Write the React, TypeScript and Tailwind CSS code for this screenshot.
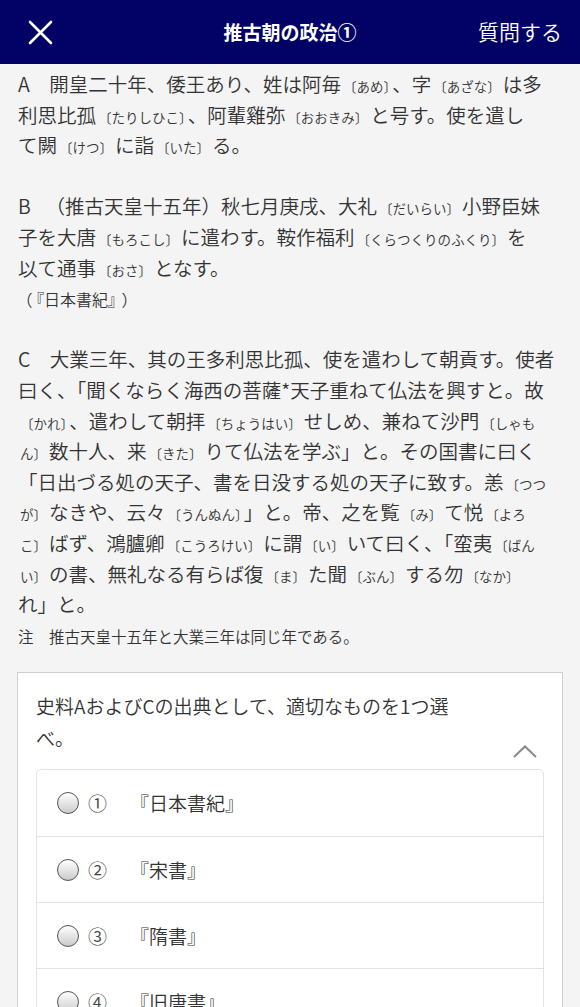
import type { ReactNode } from 'react'

const R = ({ children }: { children: ReactNode }) => (
  <span className="text-[13.5px] mx-[2px]">{children}</span>
)

const Line = ({ children }: { children?: ReactNode }) => (
  <div className="whitespace-nowrap h-[30.6px] leading-[30.6px]">{children}</div>
)

const options = [
  { no: '①', label: '『日本書紀』' },
  { no: '②', label: '『宋書』' },
  { no: '③', label: '『隋書』' },
  { no: '④', label: '『旧唐書』' },
]

export default function App() {
  return (
    <div className="min-h-screen bg-[#f4f4f4] text-[#333] font-['Noto_Sans_CJK_JP',sans-serif]">
      <header className="h-[64px] bg-[#020266] grid grid-cols-[1fr_auto_1fr] items-center text-white">
        <div className="pl-[28px]">
          <svg width="25" height="25" viewBox="0 0 25 25" fill="none" stroke="white" strokeWidth="2.6" strokeLinecap="round">
            <path d="M2 2 L23 23 M23 2 L2 23" />
          </svg>
        </div>
        <h1 className="text-[19px] font-bold">推古朝の政治①</h1>
        <div className="text-right pr-[18px] text-[21px] font-[350]">質問する</div>
      </header>

      <main className="px-[18px] pt-[5px] text-[19.5px] font-[350]">
        <Line>A　開皇二十年、倭王あり、姓は阿毎<R>〔あめ〕</R>、字<R>〔あざな〕</R>は多</Line>
        <Line>利思比孤<R>〔たりしひこ〕</R>、阿輩雞弥<R>〔おおきみ〕</R>と号す。使を遣し</Line>
        <Line>て闕<R>〔けつ〕</R>に詣<R>〔いた〕</R>る。</Line>
        <Line />
        <Line>B　<span className="ml-[5px]">（推古天皇十五年）</span>秋七月庚戌、大礼<R>〔だいらい〕</R>小野臣妹</Line>
        <Line>子を大唐<R>〔もろこし〕</R>に遣わす。鞍作福利<R>〔くらつくりのふくり〕</R>を</Line>
        <Line>以て通事<R>〔おさ〕</R>となす。</Line>
        <Line>
          <span className="text-[16px] [font-feature-settings:'palt']">
            <span className="inline-block w-[14px] text-right">（</span>
            <span className="ml-[4px]">『日本書紀』</span>
            <span className="inline-block w-[14px] ml-[6px]">）</span>
          </span>
        </Line>
        <Line />
        <Line>C　大業三年、其の王多利思比孤、使を遣わして朝貢す。使者</Line>
        <Line>曰く、「聞くならく海西の菩薩*天子重ねて仏法を興すと。故</Line>
        <Line><R>〔かれ〕</R>、遣わして朝拝<R>〔ちょうはい〕</R>せしめ、兼ねて沙門<R>〔しゃも</R></Line>
        <Line><R>ん〕</R>数十人、来<R>〔きた〕</R>りて仏法を学ぶ」と。その国書に曰く</Line>
        <Line>「日出づる処の天子、書を日没する処の天子に致す。恙<R>〔つつ</R></Line>
        <Line><R>が〕</R>なきや、云々<R>〔うんぬん〕</R>」と。帝、之を覧<R>〔み〕</R>て悦<R>〔よろ</R></Line>
        <Line><R>こ〕</R>ばず、鴻臚卿<R>〔こうろけい〕</R>に謂<R>〔い〕</R>いて曰く、「蛮夷<R>〔ばん</R></Line>
        <Line><R>い〕</R>の書、無礼なる有らば復<R>〔ま〕</R>た聞<R>〔ぶん〕</R>する勿<R>〔なか〕</R></Line>
        <Line>れ」と。</Line>
        <Line><span className="text-[15.5px]">注　推古天皇十五年と大業三年は同じ年である。</span></Line>

        <section className="mt-[22px] -mx-[1px] bg-white border border-[#cfcfcf] px-[18px] pt-[17px] pb-[20px]">
          <div className="flex items-end justify-between">
            <p className="max-w-[440px] text-[19px] leading-[32px]">史料AおよびCの出典として、適切なものを1つ選べ。</p>
            <svg className="mr-[7px] translate-y-[4px]" width="24" height="13" viewBox="0 0 24 13" fill="none" stroke="#8a8a8a" strokeWidth="2">
              <path d="M1 12 L12 1.5 L23 12" />
            </svg>
          </div>
          <ul className="mt-[15px] border border-[#e3e3e3] rounded-[5px]">
            {options.map((o, i) => (
              <li
                key={o.no}
                className={`h-[66px] flex items-center pl-[20px] text-[19px] ${i > 0 ? 'border-t border-[#e3e3e3]' : ''}`}
              >
                <span className="w-[22px] h-[22px] rounded-full border-[1.5px] border-[#555] bg-linear-to-b from-white to-[#cbcbcb]" />
                <span className="ml-[9px] w-[20px] text-[#444]">{o.no}</span>
                <span className="ml-[22px]">{o.label}</span>
              </li>
            ))}
          </ul>
        </section>
      </main>
    </div>
  )
}
